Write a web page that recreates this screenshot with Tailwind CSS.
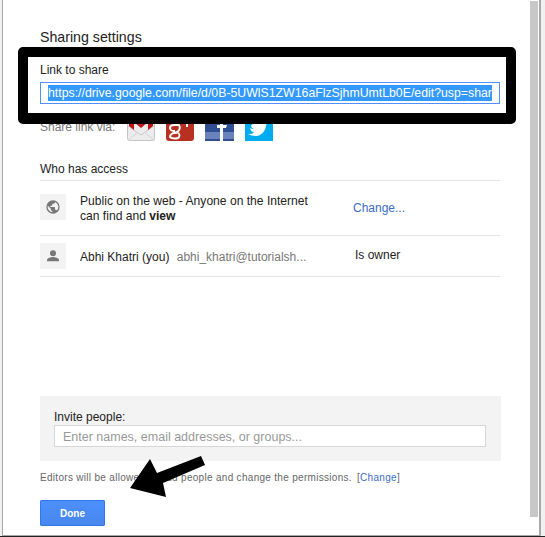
<!DOCTYPE html>
<html lang="en">
<head>
  <meta charset="UTF-8">
  <title>Sharing settings</title>
  <script src="https://cdn.jsdelivr.net/npm/@tailwindcss/browser@4"></script>
</head>
<body class="bg-[#f1f1f1] overflow-hidden font-['Liberation_Sans',Arial,sans-serif]">
  <div class="relative w-[545px] h-[537px] overflow-hidden">
    <!-- Dialog -->
    <div class="absolute left-[2px] top-0 w-[539px] h-[536px] bg-white border-l border-r-2 border-b border-[#a8a8a8]">
      <div class="w-[460px] ml-[37px] pt-[29px]">
        <h1 class="text-[14.2px] leading-[17px] text-[#222]">Sharing settings</h1>

        <div class="mt-[17px]">
          <label class="block text-[12px] leading-[14px] text-[#222]">Link to share</label>
          <div class="mt-[5px] w-[460px] h-[22px] border border-[#4d90fe] pl-[7px] pt-[2px] overflow-hidden">
            <span class="block w-[444px] h-[16px] overflow-hidden whitespace-nowrap bg-[#3399ff] text-white text-[12.3px] leading-[16px]">https://drive.google.com/file/d/0B-5UWlS1ZW16aFlzSjhmUmtLb0E/edit?usp=sharing</span>
          </div>
        </div>

        <!-- Share via -->
        <div class="flex items-start mt-[7px] h-[32px]">
          <span class="w-[87px] pt-[9px] text-[12px] leading-[14px] text-[#777]">Share link via:</span>
          <div class="flex gap-[11px] mt-[2px]">
            <svg class="w-[28px] h-[28px]" viewBox="0 0 28 28"><rect x=".5" y=".5" width="27" height="27" rx="2" fill="#ececec" stroke="#c4c4c4"/><path d="M1 13l13 9 13-9" fill="none" stroke="#c8c8c8"/><path d="M1 27l10-8M27 27l-10-8" stroke="#d4d4d4"/><path d="M2 0h24v13l-5 4V9l-7 6-7-6v8l-5-4z" fill="#c01212"/></svg>
            <svg class="w-[28px] h-[28px]" viewBox="0 0 28 28"><rect width="28" height="28" rx="3" fill="#b8301f"/><path d="M8 12h5c2 3 0 6-2 7 3 2 3 3 2 5-1 2-7 2-9 0 0-2 2-4 5-4-1-1-1-2-1-2-3 0-4-2-4-3 0-2 2-3 4-3" fill="none" stroke="#fff" stroke-width="2"/><path d="M21 5v9M17 10h8" stroke="#fff" stroke-width="2"/></svg>
            <svg class="w-[29px] h-[28px]" viewBox="0 0 29 28"><rect width="29" height="28" rx="2" fill="#2f4f92"/><rect y="19" width="29" height="7" fill="#6a83ba"/><rect y="26" width="29" height="2" fill="#2f4f92"/><path d="M15 28V15h-3v-3h3V8c0-3 2-5 7-4v3h-2c-1 0-2 0-2 2v3h4l-1 3h-3v13z" fill="#fff"/></svg>
            <svg class="w-[28px] h-[28px]" viewBox="0 0 28 28"><rect width="28" height="28" fill="#00aced"/><path d="M5 15c2 1 3 1 4 1-2-1-3-2-3-4h2c-2-1-3-3-2-5 2 2 5 4 8 4 0-3 3-5 6-3l3-1-2 3h2l-2 2c0 6-5 11-10 11-3 0-6-1-8-2 2 0 5 0 6-2-2 0-3-1-4-4z" fill="#fff"/></svg>
          </div>
        </div>

        <!-- Access list -->
        <h2 class="mt-[19px] text-[12px] leading-[14px] text-[#222]">Who has access</h2>
        <div class="mt-[4px] border-t border-[#e5e5e5]">
          <div class="flex h-[55px] pt-[13px] border-b border-[#e5e5e5]">
            <div class="w-[26px] h-[26px] bg-[#f3f3f3] flex items-center justify-center shrink-0">
              <svg class="w-[16px] h-[16px]" viewBox="0 0 24 24" fill="#777"><path d="M12 2a10 10 0 1 0 0 20 10 10 0 0 0 0-20zm-1 17.900A8 8 0 0 1 4.200 10.200L9 15v1c0 1.100.9 2 2 2v1.900zm6.900-2.500c-.3-.8-1-1.400-1.900-1.400h-1v-3c0-.6-.4-1-1-1H8v-2h2c.6 0 1-.4 1-1V7h2c1.100 0 2-.9 2-2v-.4a8 8 0 0 1 2.900 12.800z"/></svg>
            </div>
            <p class="ml-[14px] w-[246px] text-[12.1px] leading-[15px] text-[#222]">Public on the web - Anyone on the Internet can find and <b>view</b></p>
            <a class="ml-[27px] pt-[7px] text-[12px] leading-[14px] text-[#3b6cc9]">Change...</a>
          </div>
          <div class="flex h-[41px] pt-[7px] border-b border-[#e5e5e5]">
            <div class="w-[26px] h-[26px] bg-[#f3f3f3] flex items-center justify-center shrink-0">
              <svg class="w-[16px] h-[16px]" viewBox="0 0 24 24" fill="#777"><circle cx="12" cy="8" r="4.500"/><path d="M3 20v-2c0-3 6-4.500 9-4.500s9 1.500 9 4.500v2z"/></svg>
            </div>
            <p class="ml-[14px] w-[238px] pt-[7px] text-[12px] leading-[14px] text-[#222] whitespace-nowrap">Abhi Khatri (you) <span class="ml-[4px] text-[#777]">abhi_khatri@tutorialsh...</span></p>
            <span class="ml-[37px] pt-[5px] text-[12px] leading-[14px] text-[#222]">Is owner</span>
          </div>
        </div>

        <!-- Invite -->
        <div class="mt-[119px] w-[461px] h-[65px] bg-[#f3f3f3] pl-[14px] pt-[14px]">
          <label class="block text-[12px] leading-[14px] text-[#222]">Invite people:</label>
          <div class="w-[432px] h-[22px] mt-[1px] bg-white border border-[#d6d6d6] pl-[8px] text-[12.5px] leading-[22px] text-[#999]">Enter names, email addresses, or groups...</div>
        </div>
        <p class="mt-[11px] text-[10px] leading-[12px] tracking-[0.3px] text-[#666]">Editors will be allowed to add people and change the permissions. <span class="ml-[2px]">[<a class="text-[#3b6cc9]">Change</a>]</span></p>
        <button class="mt-[16px] block w-[65px] h-[26px] bg-gradient-to-b from-[#4d90fe] to-[#4787ed] border border-[#3079ed] rounded-[1px] text-white text-[10px] font-bold">Done</button>
      </div>
    </div>

    <!-- Scrollbar -->
    <div class="absolute left-[530px] top-px w-[8px] h-[516px] bg-[#c8c8c8]"></div>
    <div class="absolute left-0 bottom-0 w-full h-px bg-[#222]"></div>

    <!-- Annotations on top of the screenshot -->
    <div class="absolute left-[18px] top-[47px] w-[498px] h-[77px] border-x-[10px] border-t-[10px] border-b-[11px] border-black rounded-[5px]"></div>
    <svg class="absolute left-[125px] top-[450px] w-[85px] h-[52px]" viewBox="0 0 85 52"><path d="M5 38L25 9l7 14 44-17 4 9-42 18 3 14z" fill="#000"/></svg>
  </div>
</body>
</html>
